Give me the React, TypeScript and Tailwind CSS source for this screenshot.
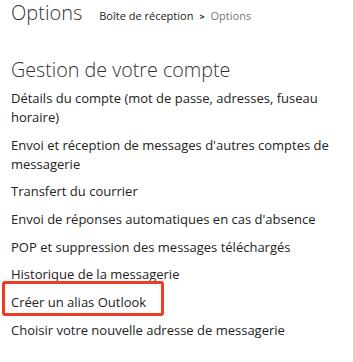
const ITEMS = [
  'Détails du compte (mot de passe, adresses, fuseau horaire)',
  "Envoi et réception de messages d'autres comptes de messagerie",
  'Transfert du courrier',
  "Envoi de réponses automatiques en cas d'absence",
  'POP et suppression des messages téléchargés',
  'Historique de la messagerie',
  'Créer un alias Outlook',
  'Choisir votre nouvelle adresse de messagerie',
];

const HIGHLIGHTED = 'Créer un alias Outlook';

export default function App() {
  return (
    <div className="h-[362px] w-[353px] overflow-hidden bg-white pl-[11px] pr-[8px] font-['Open_Sans','Noto_Sans',sans-serif] text-[#222]">
      <header className="flex items-baseline pt-[1px]">
        <h1 className="text-[20px] font-light leading-[24px] text-[#333]">Options</h1>
        <nav className="ml-[17px] flex items-baseline text-[11px] leading-[16px]">
          <span className="text-[#222]">Boîte de réception</span>
          <span className="mx-[6px] text-[9px] font-bold text-[#222]">&gt;</span>
          <span className="text-[#777]">Options</span>
        </nav>
      </header>

      <h2 className="mt-[31px] text-[19.7px] font-light leading-[28px] text-[#333]">
        Gestion de votre compte
      </h2>

      <ul className="mt-[5px] flex flex-col gap-[8.7px] text-[13px] leading-[19px]">
        {ITEMS.map((item) => (
          <li key={item} className="relative">
            {item === HIGHLIGHTED ? (
              <span
                aria-hidden
                className="absolute left-[-9px] top-[-12px] h-[35px] w-[162px] rounded-[3px] border-[3px] border-[#f23a22]"
              />
            ) : null}
            <span className="relative">{item}</span>
          </li>
        ))}
      </ul>
    </div>
  );
}
